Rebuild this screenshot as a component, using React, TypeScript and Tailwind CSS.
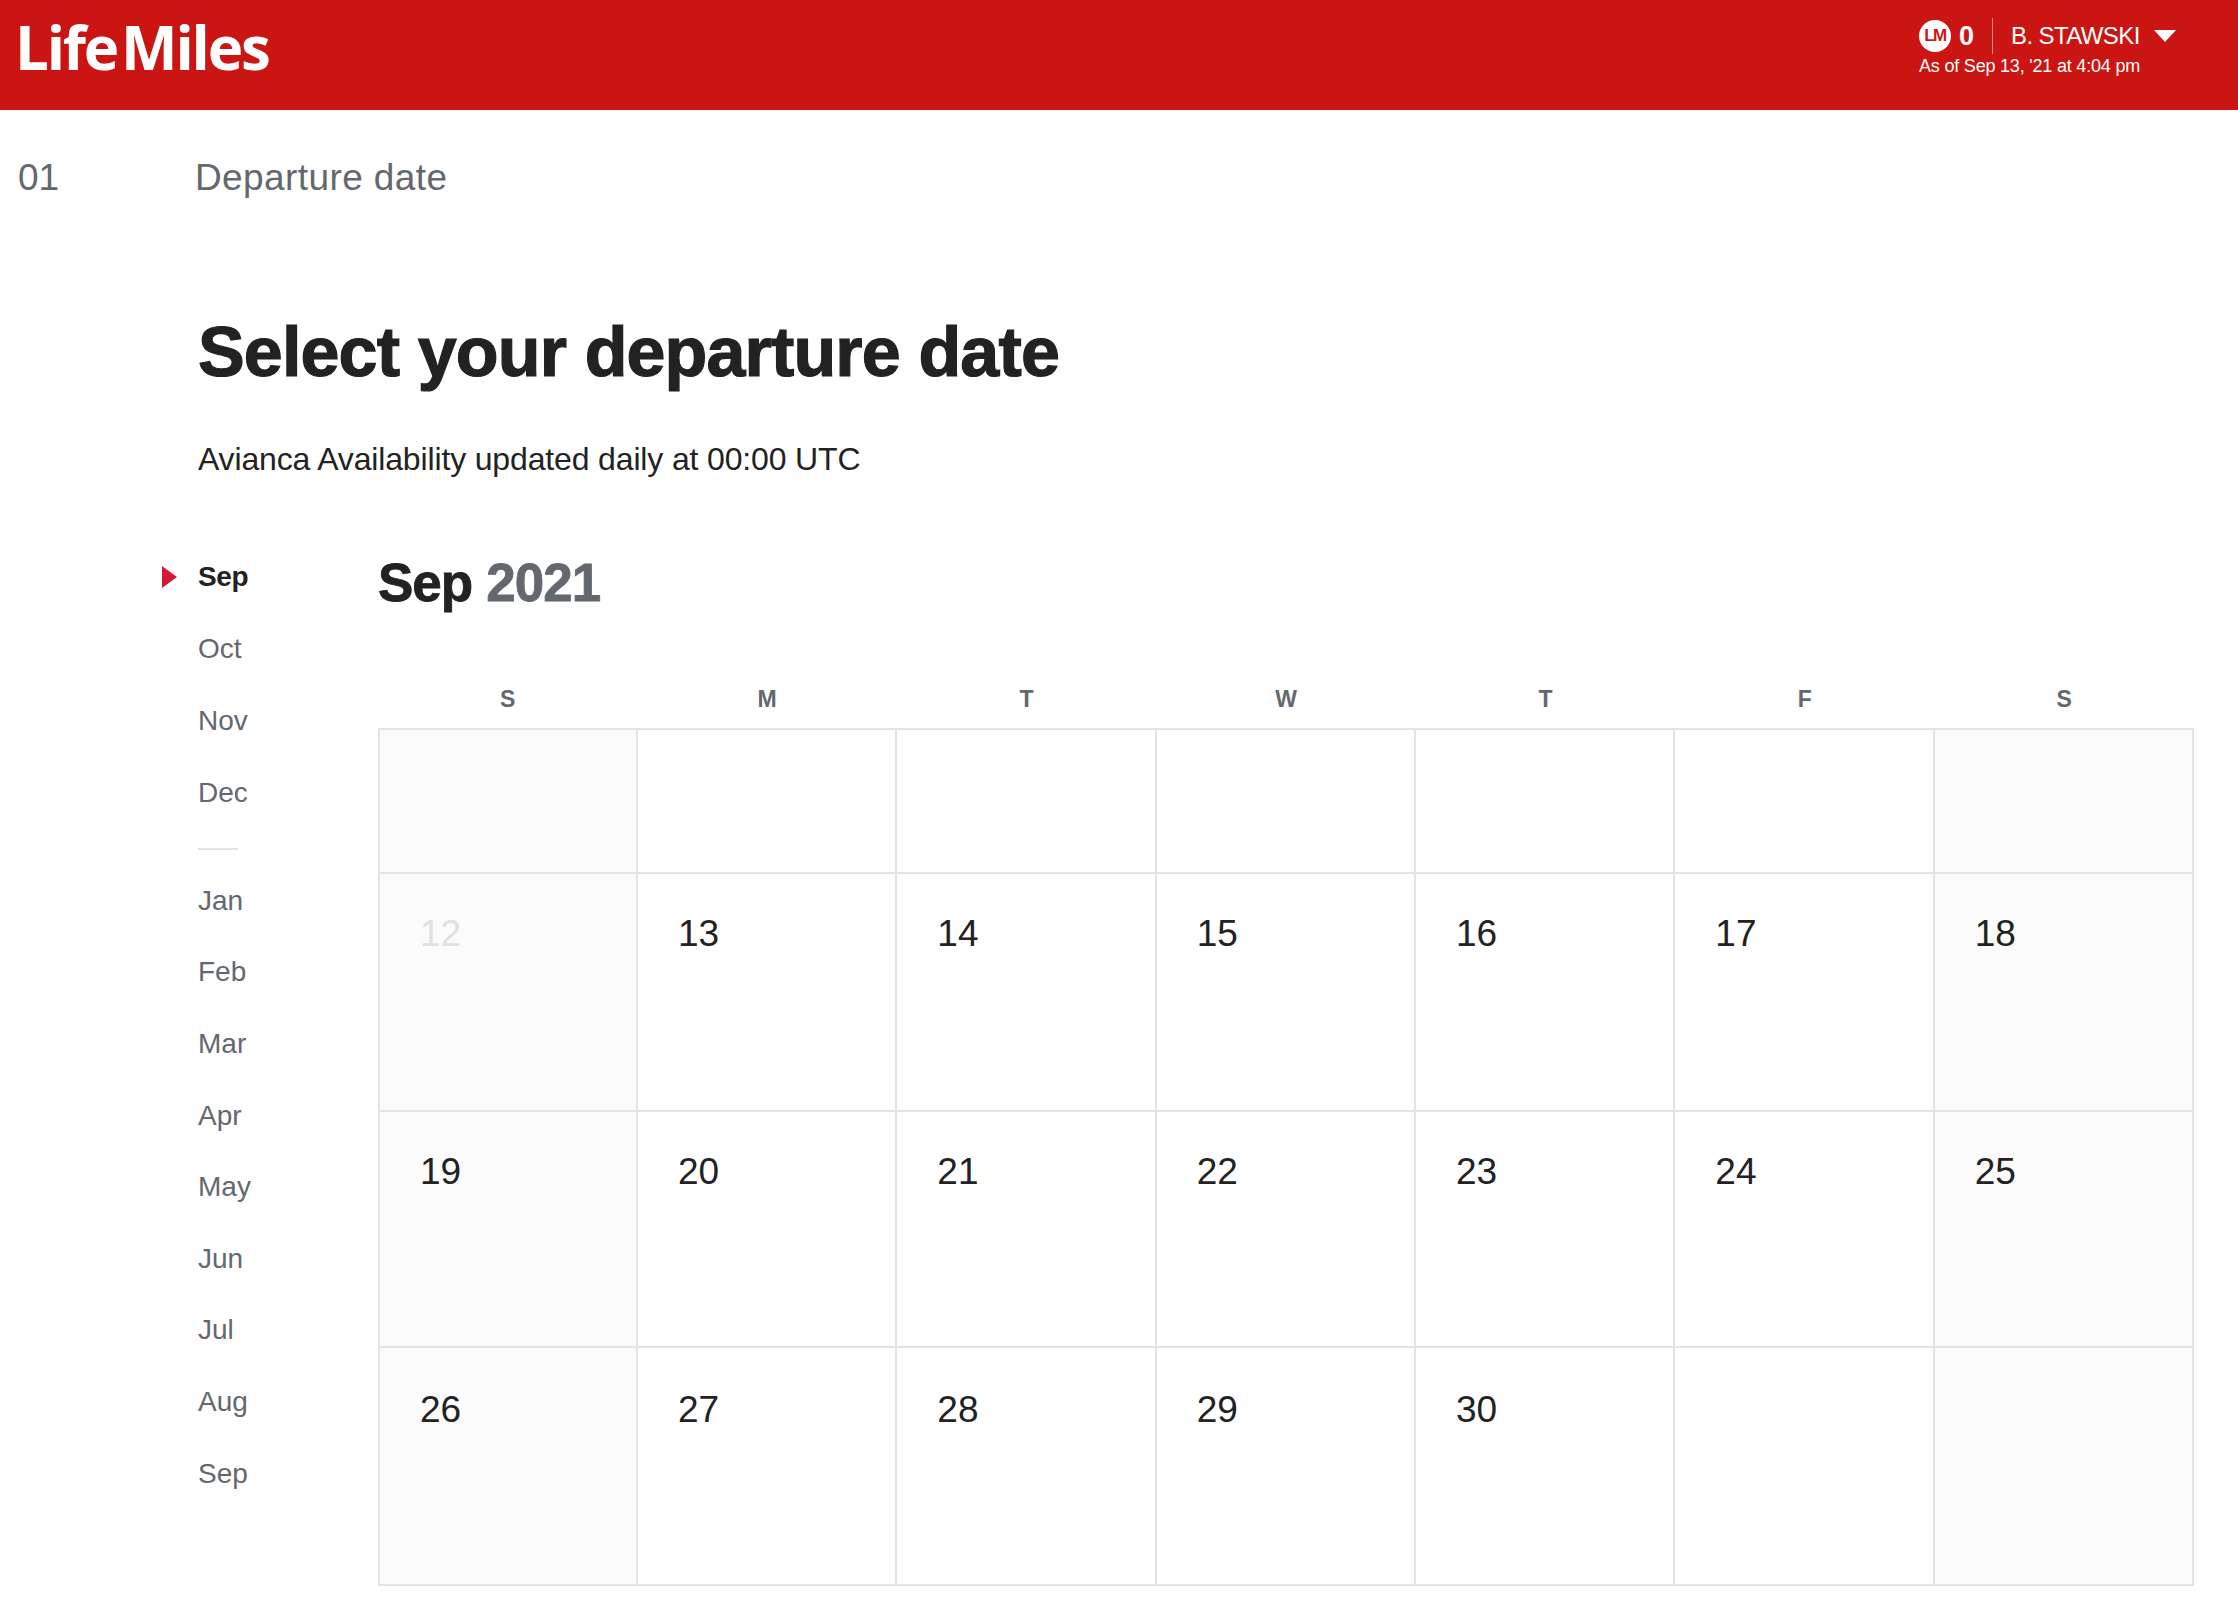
const F = "font-['Liberation_Sans',Arial,sans-serif]";
const top = ["Sep", "Oct", "Nov", "Dec"];
const bottom = ["Jan", "Feb", "Mar", "Apr", "May", "Jun", "Jul", "Aug", "Sep"];
const days = ["S", "M", "T", "W", "T", "F", "S"];
const rows: (number | null)[][] = [
  [null, null, null, null, null, null, null],
  [12, 13, 14, 15, 16, 17, 18],
  [19, 20, 21, 22, 23, 24, 25],
  [26, 27, 28, 29, 30, null, null],
];
const rowH = ["h-[144px]", "h-[238px]", "h-[236px]", "h-[238px]"];

function Month({ m, active, short }: { m: string; active?: boolean; short?: boolean }) {
  return (
    <div className={`relative flex items-center ${short ? "h-[71.6px]" : "h-[72px]"}`}>
      {active && (
        <svg className="absolute left-[-36px] top-[25px]" width="15" height="22" viewBox="0 0 15 22">
          <path d="M0 0 L15 11 L0 22 Z" fill="#d11a35" />
        </svg>
      )}
      <span className={active ? "text-[28px] font-bold text-[#222222] tracking-[-0.4px]" : "text-[28px] text-[#63686f]"}>{m}</span>
    </div>
  );
}

export default function App() {
  return (
    <div className={`${F} w-[2238px] h-[1602px] bg-white overflow-hidden`}>
      <header className="h-[110px] bg-[#cb1513] flex justify-between text-white">
        <div className="pl-[15px] pt-[9px] text-[60px] leading-[76px] font-bold tracking-[-2.2px] font-['Open_Sans',sans-serif]">
          Life<span className="ml-[4px]">Miles</span>
        </div>
        <div className="w-[319px] pt-[18px]">
          <div className="flex items-center h-[36px]">
            <span className="w-[32px] h-[32px] rounded-full bg-white flex items-center justify-center text-[#cb1513] text-[17px] font-bold tracking-[-1.5px]">LM</span>
            <span className="ml-[8px] text-[27px] font-bold">0</span>
            <span className="ml-[18px] w-[1px] h-[36px] bg-[#e58a89]" />
            <span className="ml-[18px] text-[24px] tracking-[-0.6px]">B. STAWSKI</span>
            <svg className="ml-[14px]" width="22" height="12" viewBox="0 0 22 12"><path d="M0 0 H22 L11 12 Z" fill="#fff" /></svg>
          </div>
          <div className="text-[18px] leading-[24px] tracking-[-0.2px]">As of Sep 13, '21 at 4:04 pm</div>
        </div>
      </header>

      <div className="flex h-[136px] pl-[18px] items-center text-[37px] text-[#63686f]">
        <span className="w-[177px]">01</span>
        <span className="tracking-[0.4px]">Departure date</span>
      </div>

      <div className="pl-[198px]">
        <h1 className="mt-[66px] text-[70px] leading-[80px] font-bold text-[#222222] tracking-[-0.85px] [-webkit-text-stroke:1.2px_#222222]">Select your departure date</h1>
        <p className="mt-[47px] text-[32px] leading-[40px] text-[#222222] tracking-[-0.15px]">Avianca Availability updated daily at 00:00 UTC</p>
      </div>

      <div className="flex pl-[198px] mt-[62px]">
        <aside className="w-[180px]">
          {top.map((m, i) => <Month key={i} m={m} active={i === 0} />)}
          <div className="w-[40px] h-[2px] bg-[#e3e3e3] mt-[19px] mb-[15px]" />
          {bottom.map((m, i) => <Month key={i} m={m} short />)}
        </aside>
        <main className="w-[1816px]">
          <div className="h-[48px] mt-[18px] flex items-center text-[53px] font-bold tracking-[-1px] text-[#222222] [-webkit-text-stroke:0.8px_currentColor]">
            Sep<span className="ml-[14px] text-[#63686f]">2021</span>
          </div>
          <div className="grid grid-cols-7 h-[60px] mt-[61px] pt-[2px] items-center text-center text-[23px] font-bold text-[#63686f]">
            {days.map((d, i) => <div key={i}>{d}</div>)}
          </div>
          <div className="border-t-2 border-l-2 border-[#e3e3e3]">
            {rows.map((r, ri) => (
              <div key={ri} className={`grid grid-cols-[258px_repeat(6,1fr)] ${rowH[ri]}`}>
                {r.map((d, i) => (
                  <div key={i} className={`border-r-2 border-b-2 border-[#e3e3e3] pl-[40px] text-[37px] leading-[44px] ${ri === 3 ? "pt-[40px]" : "pt-[38px]"} ${i === 0 || i === 6 ? "bg-[#fbfbfb]" : "bg-white"} ${d === 12 ? "text-[#e0e0e0]" : "text-[#222222]"}`}>
                    {d}
                  </div>
                ))}
              </div>
            ))}
          </div>
        </main>
      </div>
    </div>
  );
}
